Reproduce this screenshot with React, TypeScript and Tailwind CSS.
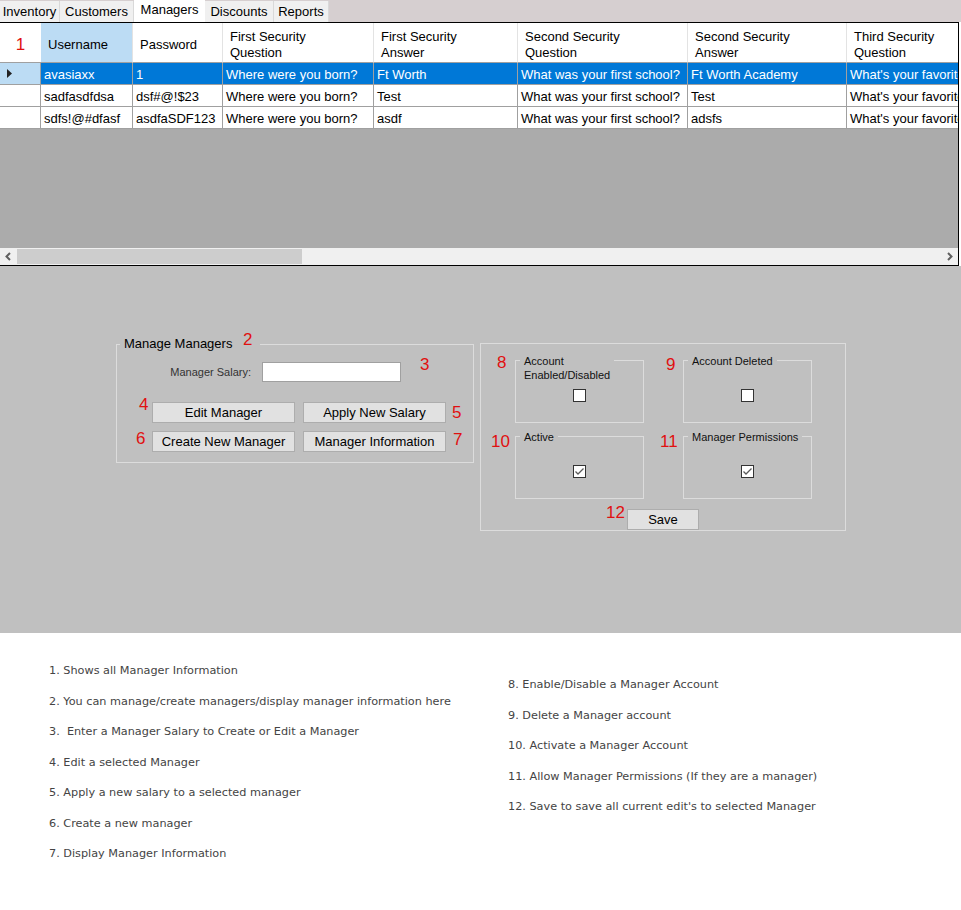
import React from 'react';

const COLS = 'grid grid-cols-[41px_92px_90px_151px_144px_170px_159px_1fr]';

const headers: { lines: string[]; active?: boolean }[] = [
  { lines: ['Username'], active: true },
  { lines: ['Password'] },
  { lines: ['First Security', 'Question'] },
  { lines: ['First Security', 'Answer'] },
  { lines: ['Second Security', 'Question'] },
  { lines: ['Second Security', 'Answer'] },
  { lines: ['Third Security', 'Question'] },
];

const rows = [
  ['avasiaxx', '1', 'Where were you born?', 'Ft Worth', 'What was your first school?', 'Ft Worth Academy', "What's your favorite color?"],
  ['sadfasdfdsa', 'dsf#@!$23', 'Where were you born?', 'Test', 'What was your first school?', 'Test', "What's your favorite color?"],
  ['sdfs!@#dfasf', 'asdfaSDF123', 'Where were you born?', 'asdf', 'What was your first school?', 'adsfs', "What's your favorite color?"],
];

const tabs = [
  { label: 'Inventory', w: 'w-[60px]' },
  { label: 'Customers', w: 'w-[74px]' },
  { label: 'Managers', w: 'w-[71px]', active: true },
  { label: 'Discounts', w: 'w-[69px]' },
  { label: 'Reports', w: 'w-[55px]' },
];

const leftNotes = [
  '1. Shows all Manager Information',
  '2. You can manage/create managers/display manager information here',
  '3.  Enter a Manager Salary to Create or Edit a Manager',
  '4. Edit a selected Manager',
  '5. Apply a new salary to a selected manager',
  '6. Create a new manager',
  '7. Display Manager Information',
];

const rightNotes = [
  '8. Enable/Disable a Manager Account',
  '9. Delete a Manager account',
  '10. Activate a Manager Account',
  '11. Allow Manager Permissions (If they are a manager)',
  "12. Save to save all current edit's to selected Manager",
];

function Num({ n, className }: { n: string; className: string }) {
  return <span className={`absolute text-[17px] leading-[17px] text-[#e01010] ${className}`}>{n}</span>;
}

function Btn({ children, className = '' }: { children: React.ReactNode; className?: string }) {
  return (
    <button className={`h-[21px] bg-[#e1e1e1] border border-[#adadad] text-[13px] leading-[19px] text-black ${className}`}>
      {children}
    </button>
  );
}

function Check({ checked }: { checked?: boolean }) {
  return (
    <div className="w-[13px] h-[13px] bg-white border border-[#333333] flex items-center justify-center">
      {checked && (
        <svg width="11" height="11" viewBox="0 0 11 11">
          <polyline points="1.5,5.5 4,8 9.5,2.5" fill="none" stroke="#5a5a5a" strokeWidth="1.3" />
        </svg>
      )}
    </div>
  );
}

function SubBox({ title, checked }: { title: React.ReactNode; checked?: boolean }) {
  return (
    <div className="relative w-[129px] h-[63px] border border-[#dcdcdc] flex justify-center pt-[28px]">
      <div className="absolute left-[4px] top-[-7px] px-[4px] bg-[#c0c0c0] text-[11px] leading-[14px] text-[#111]">{title}</div>
      <Check checked={checked} />
    </div>
  );
}

export default function App() {
  return (
    <div className="w-[961px] h-[910px] bg-white flex flex-col font-['Liberation_Sans',Arial,sans-serif] text-black overflow-hidden">
      {/* tab strip */}
      <div className="h-[22px] shrink-0 bg-[#d6cfd0] flex items-start">
        {tabs.map((t) =>
          t.active ? (
            <div key={t.label} className={`${t.w} h-[22px] bg-white text-[13px] leading-[20px] text-center`}>
              {t.label}
            </div>
          ) : (
            <div key={t.label} className={`${t.w} mt-[1px] h-[21px] bg-[#f0f0f0] border-r border-[#d9d9d9] text-[13px] leading-[22px] text-center`}>
              {t.label}
            </div>
          )
        )}
      </div>

      {/* grid */}
      <div className="w-[959px] h-[244px] shrink-0 border-t border-b border-r border-black bg-[#ababab] flex flex-col">
        <div className={`${COLS} h-[40px] bg-white text-[13px] leading-[16px]`}>
          <div className="border-b border-[#a0a0a0] pt-[4px] flex items-center justify-center text-[17px] text-[#e01010]">1</div>
          {headers.map((h, i) => (
            <div
              key={i}
              className={`border-b border-[#a0a0a0] pl-[7px] pt-[4px] flex flex-col justify-center ${i < headers.length - 1 ? 'border-r border-r-[#e3e3e3]' : ''} ${h.active ? 'bg-[#bcdcf4]' : 'bg-white'}`}
            >
              {h.lines.map((l) => (
                <span key={l} className="whitespace-nowrap">{l}</span>
              ))}
            </div>
          ))}
        </div>
        {rows.map((r, ri) => {
          const sel = ri === 0;
          return (
            <div key={ri} className={`${COLS} h-[22px] text-[13px] leading-[24px]`}>
              <div className={`border-r border-b border-[#a0a0a0] flex items-center pl-[7px] ${sel ? 'bg-[#bcdcf4]' : 'bg-white'}`}>
                {sel && (
                  <svg width="5" height="9" viewBox="0 0 5 9">
                    <polygon points="0,0 5,4.5 0,9" fill="#222" />
                  </svg>
                )}
              </div>
              {r.map((c, ci) => (
                <div
                  key={ci}
                  className={`border-b border-[#a0a0a0] pl-[3px] whitespace-nowrap overflow-hidden ${ci < r.length - 1 ? 'border-r' : ''} ${sel ? 'bg-[#0078d7] text-white' : 'bg-white'}`}
                >
                  {c}
                </div>
              ))}
            </div>
          );
        })}
        <div className="flex-1" />
        <div className="h-[17px] bg-[#f0f0f0] flex items-stretch">
          <div className="w-[17px] flex items-center justify-center">
            <svg width="17" height="17" viewBox="0 0 17 17">
              <polyline points="10,5 6.5,8.5 10,12" fill="none" stroke="#606060" strokeWidth="2" />
            </svg>
          </div>
          <div className="w-[285px] my-[1px] bg-[#cdcdcd]" />
          <div className="flex-1" />
          <div className="w-[17px] flex items-center justify-center">
            <svg width="17" height="17" viewBox="0 0 17 17">
              <polyline points="7,5 10.5,8.5 7,12" fill="none" stroke="#606060" strokeWidth="2" />
            </svg>
          </div>
        </div>
      </div>

      {/* form */}
      <div className="relative h-[367px] shrink-0 bg-[#c0c0c0] flex items-start pt-[77px] pl-[116px] gap-[6px]">
        <div className="mt-[1px] w-[358px] h-[119px] border border-[#dcdcdc]">
          <div className="-mt-[9px] ml-[3px] px-[4px] w-[140px] bg-[#c0c0c0] text-[13px] leading-[16px]">Manage Managers</div>
          <div className="flex items-center mt-[10px] ml-[52px]">
            <span className="w-[82px] text-right text-[11px] text-[#333]">Manager Salary:</span>
            <div className="ml-[11px] w-[139px] h-[20px] bg-white border border-[#a0a0a0]" />
          </div>
          <div className="grid grid-cols-[143px_143px] gap-x-[8px] gap-y-[8px] mt-[20px] ml-[35px]">
            <Btn>Edit Manager</Btn>
            <Btn>Apply New Salary</Btn>
            <Btn>Create New Manager</Btn>
            <Btn>Manager Information</Btn>
          </div>
        </div>

        <div className="w-[366px] h-[188px] border border-[#dcdcdc]">
          <div className="grid grid-cols-[129px_129px] gap-x-[39px] gap-y-[13px] mt-[16px] ml-[34px]">
            <SubBox title={<>Account<br />Enabled/Disabled</>} />
            <SubBox title="Account Deleted" />
            <SubBox title="Active" checked />
            <SubBox title="Manager Permissions" checked />
          </div>
          <div className="mt-[8px] ml-[146px]">
            <Btn className="w-[72px]">Save</Btn>
          </div>
        </div>

        <Num n="2" className="left-[243px] top-[65px]" />
        <Num n="3" className="left-[420px] top-[90px]" />
        <Num n="4" className="left-[139px] top-[130px]" />
        <Num n="5" className="left-[452px] top-[138px]" />
        <Num n="6" className="left-[136px] top-[164px]" />
        <Num n="7" className="left-[453px] top-[165px]" />
        <Num n="8" className="left-[497px] top-[88px]" />
        <Num n="9" className="left-[666px] top-[90px]" />
        <Num n="10" className="left-[491px] top-[167px]" />
        <Num n="11" className="left-[660px] top-[167px]" />
        <Num n="12" className="left-[606px] top-[238px]" />
      </div>

      {/* notes */}
      <div className="flex-1 flex font-['DejaVu_Sans',sans-serif] text-[11.25px] leading-[16px] text-[#444]">
        <div className="w-[508px] pl-[49px] pt-[30px] flex flex-col gap-[14.5px]">
          {leftNotes.map((n) => (
            <div key={n} className="whitespace-pre">{n}</div>
          ))}
        </div>
        <div className="pt-[44px] flex flex-col gap-[14.5px]">
          {rightNotes.map((n) => (
            <div key={n} className="whitespace-pre">{n}</div>
          ))}
        </div>
      </div>
    </div>
  );
}
